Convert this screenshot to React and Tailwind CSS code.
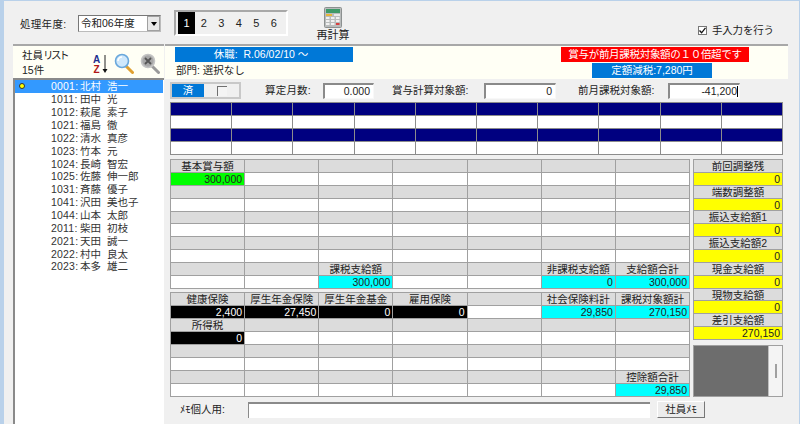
import React from 'react';

const employees = [
  ['0001', '北村', '浩一'],
  ['1011', '田中', '光'],
  ['1012', '萩尾', '素子'],
  ['1021', '福島', '徹'],
  ['1022', '清水', '真彦'],
  ['1023', '竹本', '元'],
  ['1024', '長崎', '智宏'],
  ['1025', '佐藤', '伸一郎'],
  ['1031', '斉藤', '優子'],
  ['1041', '沢田', '美也子'],
  ['1044', '山本', '太郎'],
  ['2011', '柴田', '初枝'],
  ['2021', '天田', '誠一'],
  ['2022', '村中', '良太'],
  ['2023', '本多', '雄二'],
];

// label rows are grey, value rows white unless coloured
const mainRows = [
  ['基本賞与額', '', '', '', '', '', ''],
  [{ v: '300,000', c: 'green' }, '', '', '', '', '', ''],
  ['', '', '', '', '', '', ''],
  ['', '', '', '', '', '', ''],
  ['', '', '', '', '', '', ''],
  ['', '', '', '', '', '', ''],
  ['', '', '', '', '', '', ''],
  ['', '', '', '', '', '', ''],
  ['', '', '課税支給額', '', '', '非課税支給額', '支給額合計'],
  ['', '', { v: '300,000', c: 'cyan' }, '', '', { v: '0', c: 'cyan' }, { v: '300,000', c: 'cyan' }],
];

const deductRows = [
  ['健康保険', '厚生年金保険', '厚生年金基金', '雇用保険', '', '社会保険料計', '課税対象額計'],
  [
    { v: '2,400', c: 'black' },
    { v: '27,450', c: 'black' },
    { v: '0', c: 'black' },
    { v: '0', c: 'black' },
    '',
    { v: '29,850', c: 'cyan' },
    { v: '270,150', c: 'cyan' },
  ],
  ['所得税', '', '', '', '', '', ''],
  [{ v: '0', c: 'black' }, '', '', '', '', '', ''],
  ['', '', '', '', '', '', ''],
  ['', '', '', '', '', '', ''],
  ['', '', '', '', '', '', '控除額合計'],
  ['', '', '', '', '', '', { v: '29,850', c: 'cyan' }],
];

const sideRows = [
  ['前回調整残', '0'],
  ['端数調整額', '0'],
  ['振込支給額1', '0'],
  ['振込支給額2', '0'],
  ['現金支給額', '0'],
  ['現物支給額', '0'],
  ['差引支給額', '270,150'],
];

const valueColors = {
  green: 'bg-[#00ff00] text-[#222222]',
  cyan: 'bg-[#00ffff] text-[#222222]',
  black: 'bg-black text-white',
  yellow: 'bg-[#ffff00] text-[#222222]',
};

function LabelCell({ children }) {
  return (
    <div className="bg-[#dcdcdc] text-center leading-[12px] whitespace-nowrap overflow-hidden text-[#222222]">
      {children}
    </div>
  );
}

function ValueCell({ value, color }) {
  return (
    <div className={`text-right pr-[2px] leading-[12px] overflow-hidden ${color ? valueColors[color] : 'bg-white'}`}>
      {value}
    </div>
  );
}

function PayGrid({ rows, heightClass, rowsClass }) {
  return (
    <div className={`grid grid-cols-7 gap-px bg-[#a0a0a0] border border-[#a0a0a0] w-[520px] ${heightClass} ${rowsClass}`}>
      {rows.map((row, r) =>
        row.map((cell, c) =>
          r % 2 === 0 ? (
            <LabelCell key={`${r}-${c}`}>{cell}</LabelCell>
          ) : (
            <ValueCell key={`${r}-${c}`} value={cell.v || ''} color={cell.c} />
          )
        )
      )}
    </div>
  );
}

function SunkenInput({ value, className, caret }) {
  return (
    <div
      className={`h-[16px] bg-white border-t-2 border-l-2 border-t-[#8a8a8a] border-l-[#8a8a8a] border-r border-b border-r-[#f8f8f8] border-b-[#f8f8f8] text-right leading-[13px] ${caret ? 'pr-[1px]' : 'pr-[3px]'} ${className}`}
    >
      {value}
      {caret && <span className="inline-block w-px h-[11px] align-[-2px] bg-black" />}
    </div>
  );
}

function Calculator() {
  return (
    <svg width="18" height="21" viewBox="0 0 18 21">
      <rect x="0.5" y="0.5" width="17" height="20" rx="1" fill="#b9bcbc" stroke="#8c9090" />
      <rect x="2" y="2" width="14" height="4" fill="#3f9a68" />
      <rect x="2" y="7" width="6" height="2" fill="#e8b63a" />
      {[10, 13, 16].map((y) =>
        [2, 7, 12].map((x) => (
          <rect key={`${x}-${y}`} x={x} y={y} width="3.5" height="2" fill={x === 12 && y === 16 ? '#d84040' : '#f0f0f0'} />
        ))
      )}
      <rect x="10" y="7" width="6" height="2" fill="#e9e9e9" />
    </svg>
  );
}

function Magnifier({ muted }) {
  return (
    <svg width="20" height="21" viewBox="0 0 20 21">
      <line x1="12" y1="13" x2="18.5" y2="19.5" stroke={muted ? '#9a9a9a' : '#e0a030'} strokeWidth="3" strokeLinecap="round" />
      <circle cx="8" cy="8" r="6.5" fill={muted ? '#a8a8a8' : '#cfe8fb'} stroke={muted ? '#c4c4c4' : '#6aa8dc'} strokeWidth="1.6" />
      {muted ? (
        <path d="M5 5l6 6M11 5l-6 6" stroke="#555555" strokeWidth="1.8" />
      ) : (
        <path d="M4 8a4 4 0 0 1 4-4" stroke="#ffffff" strokeWidth="1.5" fill="none" />
      )}
    </svg>
  );
}

export default function App() {
  return (
    <div className="w-[800px] h-[424px] overflow-hidden bg-[#f0f0f0] border-l-[4px] border-t border-r border-[#b9d1ea] text-[10.5px] text-[#222222] font-['Liberation_Sans','Noto_Sans_CJK_JP',sans-serif]">
      {/* top bar */}
      <div className="h-[43px] flex items-start pl-[16px]">
        <span className="mt-[16px] w-[58px] tracking-[0.3px]">処理年度:</span>
        <div className="mt-[14px] w-[83px] h-[17px] bg-white border-t border-l border-t-[#777777] border-l-[#777777] border-r border-b border-r-[#bbbbbb] border-b-[#bbbbbb] flex items-stretch justify-between pl-[2px] leading-[15px]">
          <span>令和06年度</span>
          <div className="w-[13px] bg-[#e8e8e8] border border-[#a0a0a0] flex items-center justify-center">
            <div className="w-0 h-0 border-x-[3.5px] border-x-transparent border-t-[4px] border-t-black" />
          </div>
        </div>
        <div className="ml-[13px] mt-[9px] w-[114px] h-[26px] border-2 border-t-[#a8a8a8] border-l-[#a8a8a8] border-r-white border-b-white flex items-stretch pl-[2px] text-[11px]">
          {['1', '2', '3', '4', '5', '6'].map((n, i) => (
            <div
              key={n}
              className={`flex items-center justify-center ${i === 0 ? 'w-[17px] bg-black text-white' : 'w-[17.5px]'}`}
            >
              {n}
            </div>
          ))}
        </div>
        <div className="ml-[28px] mt-[6px] w-[34px] flex flex-col items-center">
          <Calculator />
          <span className="text-[11px] leading-[14px] whitespace-nowrap">再計算</span>
        </div>
        <div className="ml-[348px] mt-[24px] flex items-center">
          <div className="w-[9px] h-[9px] bg-white border border-[#777777] flex items-center justify-center">
            <svg width="7" height="7" viewBox="0 0 7 7">
              <path d="M0.5 3.5L2.6 5.8L6.5 0.8" stroke="#111111" strokeWidth="1.3" fill="none" />
            </svg>
          </div>
          <span className="ml-[5px] tracking-[-0.2px] leading-[10px]">手入力を行う</span>
        </div>
      </div>

      <div className="flex ml-[9px] h-[380px]">
        {/* employee list */}
        <div className="w-[151px] border-t-2 border-t-[#a8a8a8]">
          <div className="h-[32px] bg-[#fffff5] flex items-start">
            <div className="ml-[9px] w-[69px] mt-[2px] leading-[15px]">
              <div className="whitespace-nowrap">
                社員<span className="tracking-[-2.5px]">リスト</span>
              </div>
              <div>15件</div>
            </div>
            <div className="mt-[9px] w-[11px] flex flex-col items-center font-bold text-[10px] leading-[10px]">
              <span className="text-[#1d2f8f]">A</span>
              <span className="text-[#b01818]">Z</span>
            </div>
            <svg className="mt-[9px]" width="6" height="19" viewBox="0 0 6 19">
              <path d="M3 0V15" stroke="#222222" strokeWidth="1" />
              <path d="M0.5 14H5.5L3 18Z" fill="#111111" />
            </svg>
            <div className="ml-[6px] mt-[7px]">
              <Magnifier />
            </div>
            <div className="ml-[6px] mt-[7px]">
              <Magnifier muted />
            </div>
          </div>
          <div className="h-[346px] bg-white border-t-2 border-l-2 border-t-[#8a8a8a] border-l-[#8a8a8a]">
            {employees.map(([code, family, given], i) => (
              <div
                key={code}
                className={`h-[12.86px] flex items-center leading-[12px] whitespace-nowrap mr-[1px] ${i === 0 ? 'bg-[#3399ff] text-white' : 'text-[#333333]'}`}
              >
                <div className="w-[36px] pl-[4px]">
                  {i === 0 && <div className="w-[6px] h-[6px] rounded-full bg-[#ffff00] border border-[#333333]" />}
                </div>
                <span className="w-[29px] tracking-[0.2px]">{code}:</span>
                <span className="w-[27px]">{family}</span>
                <span>{given}</span>
              </div>
            ))}
          </div>
        </div>

        {/* detail */}
        <div className="ml-[1px] w-[623px] border-t-2 border-t-[#a8a8a8]">
          <div className="h-[33px] bg-[#fffff5] flex justify-between pl-[10px] pr-[39px] pt-[1px]">
            <div>
              <div className="w-[178px] h-[15px] bg-[#0078d7] text-white text-center leading-[14px] pr-[6px] whitespace-pre">休職:  R.06/02/10 〜</div>
              <div className="ml-[1px] leading-[16px]">部門: 選択なし</div>
            </div>
            <div className="flex flex-col items-start">
              <div className="w-[188px] h-[15px] bg-[#ff0000] text-white text-center leading-[14px] whitespace-nowrap tracking-[-0.3px]">賞与が前月課税対象額の１０倍超です</div>
              <div className="mt-[1px] ml-[31px] w-[120px] h-[15px] bg-[#0078d7] text-white text-center leading-[14px]">定額減税:7,280円</div>
            </div>
          </div>

          <div className="h-[23px] flex items-center pl-[5px]">
            <div className="w-[71px] h-[17px] border-2 border-[#c8c8c8] flex">
              <div className="w-[32px] bg-[#0078d7] text-white text-center leading-[13px]">済</div>
              <div className="flex-1 flex items-center justify-center">
                <div className="w-[10px] h-[10px] border-t border-l border-[#707070] bg-[#f4f4f4]" />
              </div>
            </div>
            <span className="ml-[24px] w-[58px] tracking-[0.2px]">算定月数:</span>
            <SunkenInput value="0.000" className="w-[51px]" />
            <span className="ml-[18px] w-[92px] whitespace-nowrap">賞与計算対象額:</span>
            <SunkenInput value="0" className="w-[72px]" />
            <span className="ml-[22px] w-[90px] whitespace-nowrap">前月課税対象額:</span>
            <SunkenInput value="-41,200" className="w-[72px]" caret />
          </div>

          {/* navy header grid */}
          <div className="ml-[5px] w-[613px] h-[53px] grid grid-cols-10 grid-rows-4 gap-px bg-[#8c8c8c] border border-[#8c8c8c]">
            {Array.from({ length: 40 }).map((_, i) => (
              <div key={i} className={Math.floor(i / 10) % 2 === 0 ? 'bg-[#000080]' : 'bg-white'} />
            ))}
          </div>

          <div className="flex ml-[5px] mt-[4px]">
            <div>
              <PayGrid rows={mainRows} heightClass="h-[130px]" rowsClass="grid-rows-10" />
              <div className="mt-[3px]">
                <PayGrid rows={deductRows} heightClass="h-[105px]" rowsClass="grid-rows-8" />
              </div>
            </div>
            <div className="ml-[3px]">
              <div className="w-[90px] h-[181px] grid grid-cols-1 grid-rows-14 gap-px bg-[#a0a0a0] border border-[#a0a0a0]">
                {sideRows.map(([label, value]) => (
                  <React.Fragment key={label}>
                    <LabelCell>{label}</LabelCell>
                    <ValueCell value={value} color="yellow" />
                  </React.Fragment>
                ))}
              </div>
              <div className="mt-[5px] w-[90px] h-[52px] border border-[#a0a0a0] flex">
                <div className="flex-1 bg-[#6d6d6d]" />
                <div className="w-[14px] bg-[#f4f4f4] border-l border-[#c0c0c0] flex items-center justify-center">
                  <div className="w-[2px] h-[14px] bg-[#a0a0a0]" />
                </div>
              </div>
            </div>
          </div>

          {/* memo */}
          <div className="flex items-center mt-[4px] pl-[15px]">
            <span className="w-[68px] whitespace-nowrap">ﾒﾓ個人用:</span>
            <div className="w-[402px] h-[16px] bg-white border-t-2 border-l border-t-[#8a8a8a] border-l-[#8a8a8a]" />
            <div className="ml-[7px] w-[48px] h-[17px] bg-[#ececec] border border-t-white border-l-white border-r-[#777777] border-b-[#777777] text-center leading-[15px]">
              社員ﾒﾓ
            </div>
          </div>
        </div>
      </div>
    </div>
  );
}
